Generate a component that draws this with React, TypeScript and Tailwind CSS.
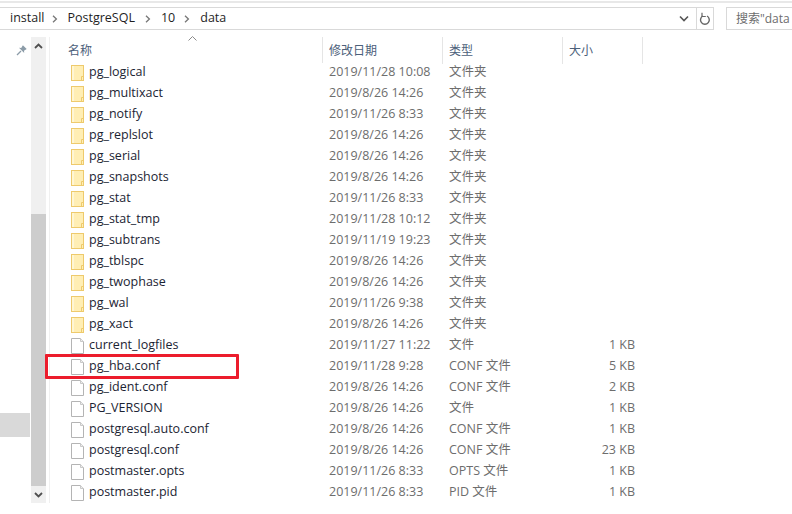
const folders = [
  ['pg_logical', '2019/11/28 10:08'],
  ['pg_multixact', '2019/8/26 14:26'],
  ['pg_notify', '2019/11/26 8:33'],
  ['pg_replslot', '2019/8/26 14:26'],
  ['pg_serial', '2019/8/26 14:26'],
  ['pg_snapshots', '2019/8/26 14:26'],
  ['pg_stat', '2019/11/26 8:33'],
  ['pg_stat_tmp', '2019/11/28 10:12'],
  ['pg_subtrans', '2019/11/19 19:23'],
  ['pg_tblspc', '2019/8/26 14:26'],
  ['pg_twophase', '2019/8/26 14:26'],
  ['pg_wal', '2019/11/26 9:38'],
  ['pg_xact', '2019/8/26 14:26'],
]

const files = [
  ['current_logfiles', '2019/11/27 11:22', '文件', '1 KB'],
  ['pg_hba.conf', '2019/11/28 9:28', 'CONF 文件', '5 KB'],
  ['pg_ident.conf', '2019/8/26 14:26', 'CONF 文件', '2 KB'],
  ['PG_VERSION', '2019/8/26 14:26', '文件', '1 KB'],
  ['postgresql.auto.conf', '2019/8/26 14:26', 'CONF 文件', '1 KB'],
  ['postgresql.conf', '2019/8/26 14:26', 'CONF 文件', '23 KB'],
  ['postmaster.opts', '2019/11/26 8:33', 'OPTS 文件', '1 KB'],
  ['postmaster.pid', '2019/11/26 8:33', 'PID 文件', '1 KB'],
]

function FolderIcon() {
  return (
    <svg width="13" height="16" viewBox="0 0 13 16" className="shrink-0">
      <rect x="0.5" y="0.5" width="12" height="15" fill="#ffeeb4" stroke="#eeca6c" />
      <path d="M1 1h2v14H1z" fill="#fff6d4" />
      <path d="M10.5 11.500v4M10.500 11.500h2" stroke="#eeca6c" fill="none" />
    </svg>
  )
}

function FileIcon() {
  return (
    <svg width="13" height="16" viewBox="0 0 13 16" className="shrink-0">
      <path d="M0.5 0.5h9l3 3v12h-12z" fill="#fff" stroke="#b4b4b4" />
      <path d="M9.500 0.500v3h3" fill="#eee" stroke="#c9c9c9" />
    </svg>
  )
}

function Row({ icon, name, date, type, size }: { icon: React.ReactNode; name: string; date: string; type: string; size?: string }) {
  return (
    <div className="flex items-center h-[21px] text-[12.5px]">
      <div className="w-[272px] pl-[21px] flex items-center gap-[5px] text-[#1c2433]">
        {icon}
        <span>{name}</span>
      </div>
      <div className="w-[120px] pl-[7px] text-[#6d6d6d]">{date}</div>
      <div className="w-[120px] pl-[7px] text-[#6d6d6d]">{type}</div>
      <div className="w-[73px] text-right text-[#6d6d6d]">{size}</div>
    </div>
  )
}

function Head({ label, width }: { label: string; width: string }) {
  return (
    <div className={`${width} h-[27px] pl-[6px] pt-[5px] text-[12px] text-[#4c607a] border-r border-[#e5e5e5]`}>
      {label}
    </div>
  )
}

function Sep() {
  return (
    <svg width="6" height="8" viewBox="0 0 6 8" className="mx-[10px]">
      <path d="M1 .8L4.400 4 1 7.200" stroke="#777" strokeWidth="1.300" fill="none" />
    </svg>
  )
}

export default function App() {
  return (
    <div className="w-[792px] h-[514px] bg-white overflow-hidden flex flex-col" style={{ fontFamily: '"Open Sans", "Noto Sans CJK SC", sans-serif' }}>
      <div className="h-[2px] mt-px bg-[#e8e8e8]" />
      <div className="flex h-[23px] mt-[4px]">
        <div className="w-[714px] border-y border-r border-[#d9d9d9] flex items-center text-[12.5px] text-[#1f1f1f]">
          <div className="flex-1 flex items-center pl-[10px]">
            <span className="mr-[-3px]">install</span>
            <Sep />
            <span>PostgreSQL</span>
            <Sep />
            <span className="mr-[-1px]">10</span>
            <Sep />
            <span>data</span>
          </div>
          <svg width="10" height="7" viewBox="0 0 10 7" className="mr-[7px]">
            <path d="M1 1.500l4 4 4-4" stroke="#555" strokeWidth="1.600" fill="none" />
          </svg>
          <div className="w-[17px] h-full border-l border-[#d9d9d9] flex items-center justify-center">
            <svg width="12" height="14" viewBox="0 0 12 14">
              <path d="M8 4a4.400 4.400 0 1 1-4.200 0" stroke="#666" strokeWidth="1.400" fill="none" />
              <path d="M3 .8v3.700h3.800" stroke="#666" strokeWidth="1.200" fill="none" />
            </svg>
          </div>
        </div>
        <div className="ml-[12px] flex-1 border-y border-l border-[#d9d9d9] pl-[9px] flex items-center text-[12px] text-[#6d6d6d] whitespace-nowrap overflow-hidden">
          搜索"data
        </div>
      </div>
      <div className="flex flex-1 mt-[7px] relative">
        <div className="w-[31px] relative">
          <svg width="12" height="12" viewBox="0 0 12 12" className="ml-[16px] mt-[7px]">
            <path d="M3 3.800L8.200 9 8 6.800l2.700-1.700-3.800-3.800L5.200 4z" fill="#8c9ca8" />
            <path d="M5 7L1 11" stroke="#8c9ca8" strokeWidth="1.300" />
          </svg>
          <div className="absolute left-0 top-[376px] w-[30px] h-[24px] bg-[#d9d9d9]" />
        </div>
        <div className="w-[15px] h-[466px] bg-[#f0f0f0] flex flex-col">
          <div className="h-[17px] flex items-center justify-center">
            <svg width="9" height="6" viewBox="0 0 9 6"><path d="M1 5l3.500-3.500L8 5" stroke="#505050" strokeWidth="1.800" fill="none" /></svg>
          </div>
          <div className="mt-[160px] h-[272px] bg-[#cdcdcd]" />
          <div className="flex-1 flex items-center justify-center">
            <svg width="9" height="6" viewBox="0 0 9 6"><path d="M1 1l3.500 3.500L8 1" stroke="#505050" strokeWidth="1.800" fill="none" /></svg>
          </div>
        </div>
        <div className="w-[3px]" />
        <div className="border-l border-[#f0f0f0] h-[466px]" />
        <div className="flex-1 relative">
          <svg width="9" height="5" viewBox="0 0 9 5" className="absolute left-[138px] top-[-1px]">
            <path d="M.5 4.500l4-4 4 4" stroke="#8a8a8a" fill="none" />
          </svg>
          <div className="flex mb-[-2px]">
            <div className="w-[273px] h-[26px] pl-[18px] pt-[5px] text-[12px] text-[#4c607a] border-r border-[#e5e5e5]">名称</div>
            <Head label="修改日期" width="w-[120px]" />
            <Head label="类型" width="w-[120px]" />
            <Head label="大小" width="w-[80px]" />
          </div>
          {folders.map(([name, date]) => (
            <Row key={name} icon={<FolderIcon />} name={name} date={date} type="文件夹" />
          ))}
          {files.map(([name, date, type, size]) => (
            <Row key={name} icon={<FileIcon />} name={name} date={date} type={type} size={size} />
          ))}
          <div className="absolute left-[-5px] top-[317px] w-[194px] h-[25px] border-[3px] border-[#ec1c2c] rounded-[1px]" />
        </div>
      </div>
    </div>
  )
}
